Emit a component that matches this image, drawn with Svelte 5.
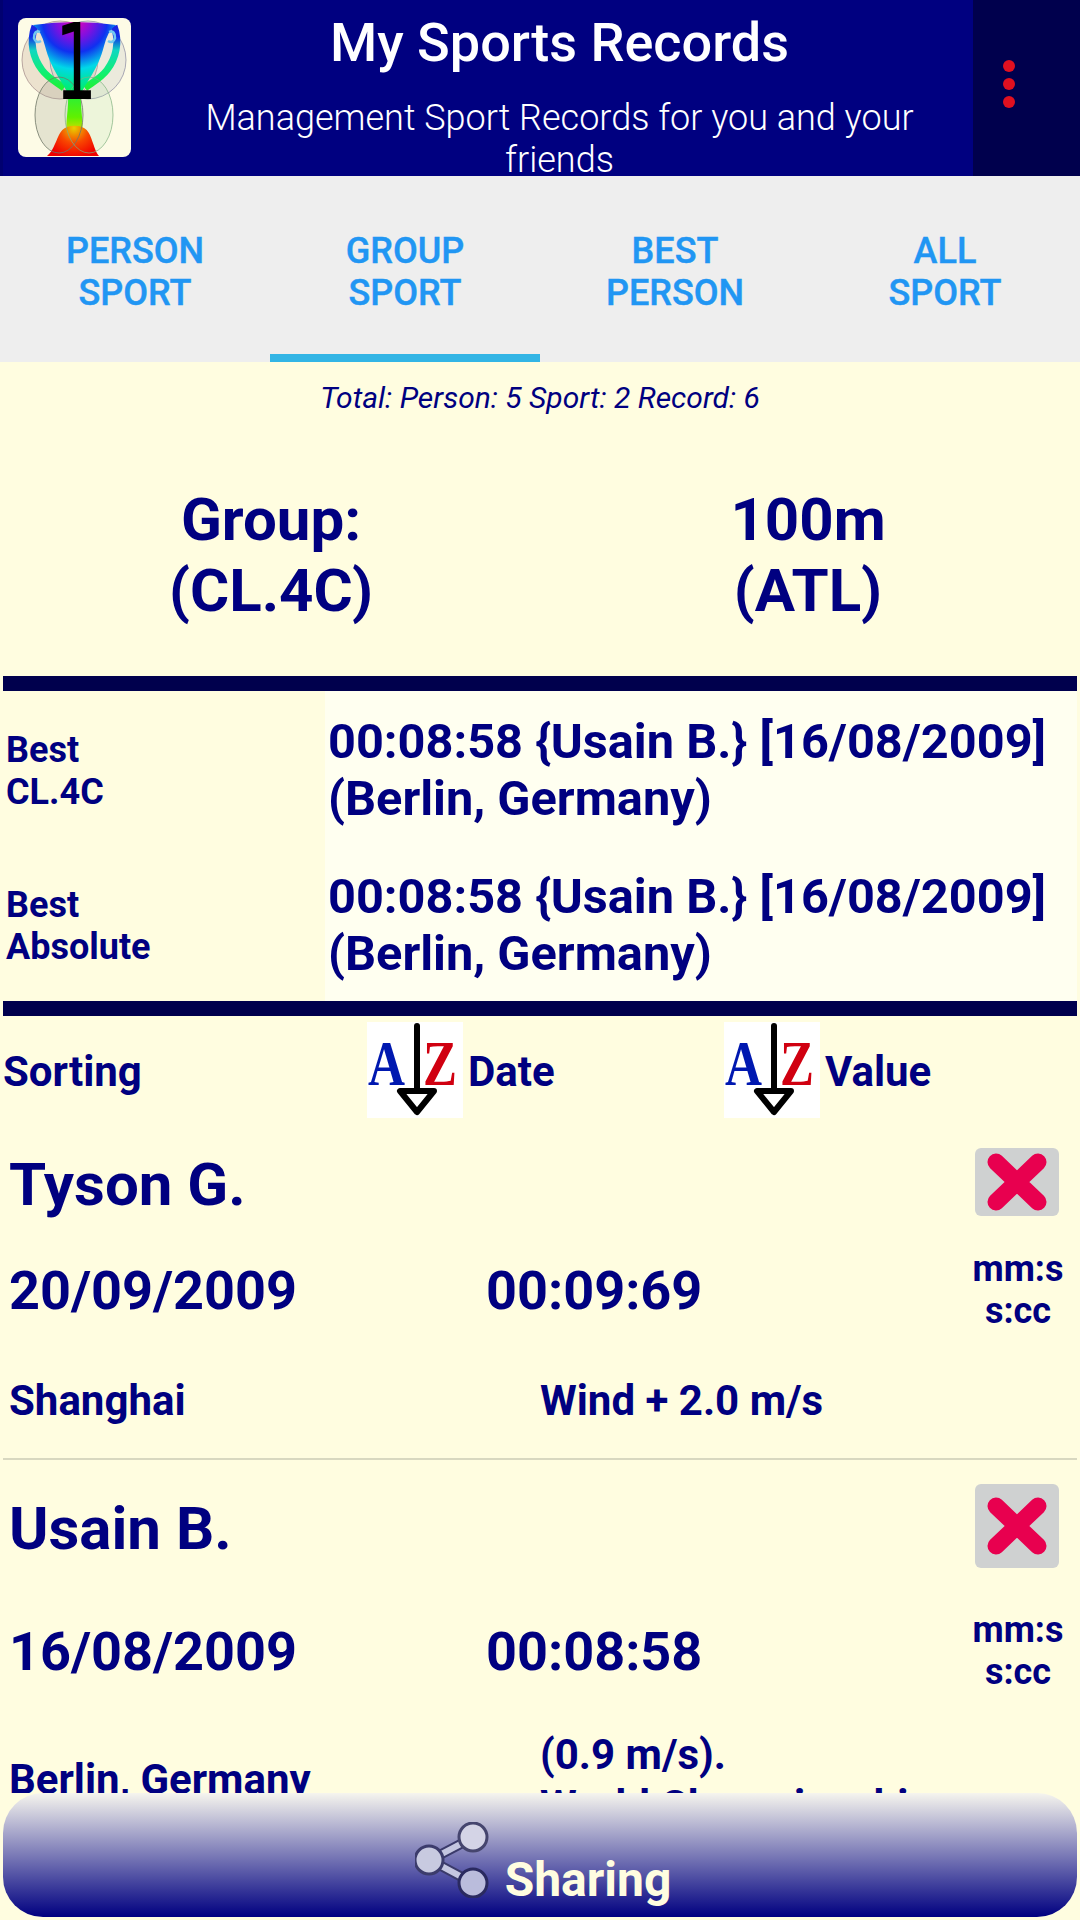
<script lang="ts">
  const tabs = [["PERSON", "SPORT"], ["GROUP", "SPORT"], ["BEST", "PERSON"], ["ALL", "SPORT"]];
  const bests = [
    { label: ["Best", "CL.4C"], value: "00:08:58 {Usain B.} [16/08/2009] (Berlin, Germany)" },
    { label: ["Best", "Absolute"], value: "00:08:58 {Usain B.} [16/08/2009] (Berlin, Germany)" }
  ];
  const records = [
    { name: "Tyson G.", date: "20/09/2009", time: "00:09:69", place: "Shanghai", note: "Wind + 2.0 m/s", cls: "first" },
    { name: "Usain B.", date: "16/08/2009", time: "00:08:58", place: "Berlin, Germany", note: "(0.9 m/s).\nWorld Championship", cls: "second" }
  ];
</script>

<div class="page">
  <header class="top">
    <div class="logo">
      <svg width="113" height="139" viewBox="0 0 113 139">
        <defs>
          <radialGradient id="cup" gradientUnits="userSpaceOnUse" cx="57" cy="2" r="72">
            <stop offset="0" stop-color="#f000b0" />
            <stop offset="0.25" stop-color="#8010e0" />
            <stop offset="0.45" stop-color="#1030f0" />
            <stop offset="0.68" stop-color="#00d8e8" />
            <stop offset="1" stop-color="#00f060" />
          </radialGradient>
          <linearGradient id="handle" gradientUnits="userSpaceOnUse" x1="0" y1="4" x2="0" y2="72">
            <stop offset="0" stop-color="#2020e0" />
            <stop offset="0.22" stop-color="#1030e8" />
            <stop offset="0.42" stop-color="#10d8c0" />
            <stop offset="0.75" stop-color="#10f070" />
            <stop offset="1" stop-color="#20f030" />
          </linearGradient>
          <linearGradient id="stem" x1="0" y1="0" x2="0" y2="1">
            <stop offset="0" stop-color="#20f040" />
            <stop offset="0.6" stop-color="#60f000" />
            <stop offset="1" stop-color="#f0d800" />
          </linearGradient>
          <radialGradient id="base" gradientUnits="userSpaceOnUse" cx="56" cy="110" r="30">
            <stop offset="0" stop-color="#e8d000" />
            <stop offset="0.5" stop-color="#f84800" />
            <stop offset="1" stop-color="#f00000" />
          </radialGradient>
        </defs>
        <ellipse cx="42" cy="42" rx="38" ry="39" fill="#c8a898" fill-opacity="0.3" stroke="#a08888" stroke-opacity="0.7" />
        <ellipse cx="70" cy="42" rx="38" ry="39" fill="#b8b8c0" fill-opacity="0.25" stroke="#8888a0" stroke-opacity="0.7" />
        <ellipse cx="41" cy="97" rx="24" ry="38" fill="#a0a090" fill-opacity="0.25" />
        <ellipse cx="71" cy="97" rx="24" ry="38" fill="#b0e0a8" fill-opacity="0.2" />
        <path d="M17 8 C11 24 15 40 24 52 C30 60 38 64 46 70" fill="none" stroke="url(#handle)" stroke-width="7" />
        <path d="M96 8 C102 24 98 40 89 52 C83 60 75 64 67 70" fill="none" stroke="url(#handle)" stroke-width="7" />
        <path d="M15 7 Q57 1 98 7 Q90 12 86 28 C80 52 68 64 63 76 L50 76 C45 64 33 52 27 28 Q23 12 15 7 Z" fill="url(#cup)" />
        <path d="M50 74 L63 74 C62 92 66 104 64 116 L49 116 C47 104 51 92 50 74 Z" fill="url(#stem)" />
        <path d="M29 138 C38 131 39 114 47 110 C53 107 60 107 66 110 C74 114 75 131 81 138 Z" fill="url(#base)" />
        <ellipse cx="41" cy="97" rx="24" ry="38" fill="none" stroke="#707868" stroke-opacity="0.8" />
        <ellipse cx="71" cy="97" rx="24" ry="38" fill="none" stroke="#80b080" stroke-opacity="0.7" />
        <path d="M22 14 q-6 -2 -6 6 q2 6 7 3" fill="none" stroke="#70c8f0" stroke-width="2.5" />
        <path d="M91 14 q6 -2 6 6 q-2 6 -7 3" fill="none" stroke="#70c8f0" stroke-width="2.5" />
        <text x="37" y="81" class="one" textLength="42" lengthAdjust="spacingAndGlyphs">1</text>
      </svg>
    </div>
    <div class="titles">
      <h1>My Sports Records</h1>
      <p>Management Sport Records for you and your friends</p>
    </div>
    <div class="menu" aria-label="menu">
      <span></span><span></span><span></span>
    </div>
  </header>

  <nav class="tabs">
    {#each tabs as t, i}
      <div class="tab" class:active={i === 1}>{t[0]}<br />{t[1]}</div>
    {/each}
  </nav>

  <main class="body">
    <div class="total">Total: Person: 5 Sport: 2 Record: 6</div>

    <div class="heading">
      <div class="head-left">Group:<br />(CL.4C)</div>
      <div class="head-right">100m<br />(ATL)</div>
    </div>

    <section class="bests">
      {#each bests as b}
        <div class="best">
          <div class="best-label">{b.label[0]}<br />{b.label[1]}</div>
          <div class="best-value">{b.value}</div>
        </div>
      {/each}
    </section>

    <div class="sorting">
      <span class="sort-title">Sorting</span>
      {#each ["Date", "Value"] as s}
        <span class="sort-item">
          <svg class="az" width="96" height="96" viewBox="0 0 96 96">
            <rect width="96" height="96" fill="#fff" />
            <text x="1" y="63" class="az-a" textLength="37" lengthAdjust="spacingAndGlyphs">A</text>
            <text x="56" y="63" class="az-z" textLength="34" lengthAdjust="spacingAndGlyphs">Z</text>
            <path d="M50 4 V72" stroke="#000" stroke-width="6" stroke-linecap="round" />
            <path d="M33 69 H67 L50 90 Z" fill="#fff" stroke="#000" stroke-width="6" stroke-linejoin="round" />
          </svg>
          <span class="sort-label">{s}</span>
        </span>
      {/each}
    </div>

    <div class="records">
      {#each records as r}
        <article class="record {r.cls}">
          <div class="rec-head">
            <span class="rec-name">{r.name}</span>
            <button class="del" type="button" aria-label="delete">
              <svg width="62" height="58" viewBox="0 0 62 58">
                <path d="M10 9 L52 49 M52 9 L10 49" stroke="#e8004f" stroke-width="17" stroke-linecap="round" />
              </svg>
            </button>
          </div>
          <div class="rec-main">
            <span class="rec-date">{r.date}</span>
            <span class="rec-time">{r.time}</span>
            <span class="rec-unit">mm:ss:cc</span>
          </div>
          <div class="rec-foot">
            <span class="rec-place">{r.place}</span>
            <span class="rec-note">{r.note}</span>
          </div>
        </article>
      {/each}
    </div>
  </main>

  <button class="share" type="button">
    <svg class="share-ico" width="74" height="76" viewBox="0 0 74 76">
      <path d="M59 15 L15 38 L58 61" fill="none" stroke="#3a3a6a" stroke-width="10" />
      <path d="M59 15 L15 38 L58 61" fill="none" stroke="#c4c6e0" stroke-width="6" />
      <circle cx="58" cy="15" r="14" fill="#d4d4e6" stroke="#45456e" stroke-width="3" />
      <circle cx="14" cy="38" r="14" fill="#c8cae0" stroke="#3c3c6c" stroke-width="3" />
      <circle cx="58" cy="61" r="14" fill="#babcdc" stroke="#2a2a60" stroke-width="3" />
    </svg>
    <span>Sharing</span>
  </button>
</div>

<style>
  :global(body) {
    margin: 0;
    background: #fffde0;
  }
  .page {
    width: 1080px;
    height: 1920px;
    display: flex;
    flex-direction: column;
    overflow: hidden;
    font-family: Roboto, "Liberation Sans", sans-serif;
    color: #000080;
  }

  /* Header */
  .top {
    height: 176px;
    flex: none;
    display: flex;
    background: #000080;
    box-shadow: inset 3px 0 #000070;
    overflow: hidden;
  }
  .logo {
    flex: none;
    width: 113px;
    height: 139px;
    margin: 18px 0 0 18px;
    background: #fdfbe6;
    border-radius: 8px;
  }
  .logo svg { display: block; }
  .one {
    font-family: "DejaVu Sans", sans-serif;
    font-size: 105px;
    fill: #000;
  }
  .titles {
    flex: 1;
    min-width: 0;
    padding: 11px 45px 0 60px;
    text-align: center;
    color: #fff;
  }
  h1 {
    margin: 0;
    font-size: 54px;
    line-height: 64px;
    font-weight: 500;
  }
  .titles p {
    margin: 22px 0 0;
    font-size: 36px;
    line-height: 42px;
    font-weight: 300;
  }
  .menu {
    flex: none;
    width: 107px;
    background: #00004d;
    display: flex;
    flex-direction: column;
    align-items: center;
    justify-content: center;
    gap: 6px;
    padding: 0 36px 8px 0;
    box-sizing: border-box;
  }
  .menu span {
    width: 12px;
    height: 12px;
    border-radius: 50%;
    background: #e01020;
  }

  /* Tabs */
  .tabs {
    height: 186px;
    flex: none;
    display: grid;
    grid-template-columns: repeat(4, 270px);
    background: #eeeeee;
  }
  .tab {
    box-sizing: border-box;
    padding-top: 54px;
    text-align: center;
    font-size: 36px;
    line-height: 42px;
    font-weight: 500;
    color: #2196f3;
    -webkit-text-stroke: 0.4px #2196f3;
  }
  .tab.active { border-bottom: 8px solid #33b5e5; }

  /* Body */
  .body {
    flex: 1;
    min-height: 0;
    overflow: hidden;
  }
  .total {
    margin-top: 19px;
    font-size: 30px;
    line-height: 34px;
    font-style: italic;
    text-align: center;
  }
  .heading {
    margin-top: 69px;
    display: grid;
    grid-template-columns: 1fr 1fr;
    text-align: center;
    font-size: 60px;
    line-height: 71px;
    font-weight: 700;
  }
  .head-left { padding-left: 2px; }
  .head-right { padding-right: 4px; }
  .bests {
    margin: 50px 3px 0;
    border-top: 15px solid #00004d;
    border-bottom: 15px solid #00004d;
  }
  .best {
    height: 155px;
    display: flex;
    align-items: center;
  }
  .best-label {
    flex: none;
    width: 322px;
    box-sizing: border-box;
    padding: 4px 0 0 3px;
    font-size: 36px;
    line-height: 42px;
    font-weight: 700;
  }
  .best-value {
    align-self: stretch;
    flex: 1;
    display: flex;
    align-items: center;
    padding: 3px 0 0 3px;
    background: #fffff0;
    font-size: 48.7px;
    line-height: 57px;
    font-weight: 700;
  }
  .sorting {
    display: grid;
    grid-template-columns: 364px 357px 1fr;
    align-items: center;
    padding: 6px 0 0 3px;
    font-size: 42px;
    font-weight: 700;
  }
  .sort-title, .sort-label { padding-top: 2px; }
  .sort-item {
    display: flex;
    align-items: center;
    gap: 5px;
  }
  .az { flex: none; }
  .az-a, .az-z {
    font-family: "Liberation Serif", serif;
    font-size: 63px;
  }
  .az-a { fill: #0018b0; }
  .az-z { fill: #d00010; }

  /* Records */
  .records { margin: 0 3px; padding-top: 22px; }
  .record { padding-left: 6px; }
  .record.first {
    height: 318px;
    border-bottom: 2px solid #d8d8c0;
  }
  .record.second { padding-top: 23px; }
  .rec-head {
    height: 84px;
    display: flex;
    align-items: center;
    justify-content: space-between;
    padding-right: 18px;
  }
  .record.second .rec-head { height: 86px; }
  .rec-name {
    padding-top: 6px;
    font-size: 60px;
    font-weight: 700;
    line-height: 70px;
  }
  .del {
    width: 84px;
    height: 68px;
    padding: 0;
    border: none;
    border-radius: 6px;
    background: #cfd1d1;
    display: flex;
    align-items: center;
    justify-content: center;
  }
  .record.second .del { height: 84px; }
  .rec-main {
    display: grid;
    grid-template-columns: 477px 486px 92px;
    align-items: center;
    margin-top: 24px;
    font-size: 54px;
    font-weight: 700;
  }
  .record.second .rec-main { margin-top: 40px; }
  .rec-unit {
    font-size: 36px;
    line-height: 42px;
    text-align: center;
    word-break: break-all;
  }
  .rec-foot {
    display: grid;
    grid-template-columns: 531px 1fr;
    align-items: center;
    margin-top: 43px;
    font-size: 42px;
    line-height: 48px;
    font-weight: 700;
  }
  .record.second .rec-foot { margin-top: 36px; }
  .rec-note { white-space: pre-line; line-height: 51px; }

  /* Bottom button */
  .share {
    flex: none;
    height: 124px;
    margin: 0 3px 3px;
    padding: 0;
    border: none;
    border-radius: 40px;
    background: linear-gradient(#f6f5ee, #000080);
    display: flex;
    align-items: flex-start;
    justify-content: center;
    gap: 16px;
    font-family: inherit;
    font-size: 48px;
    font-weight: 700;
    color: #fffde0;
  }
  .share-ico { margin: 29px 0 0 6px; }
  .share span { margin-top: 61px; line-height: 52px; }
</style>
